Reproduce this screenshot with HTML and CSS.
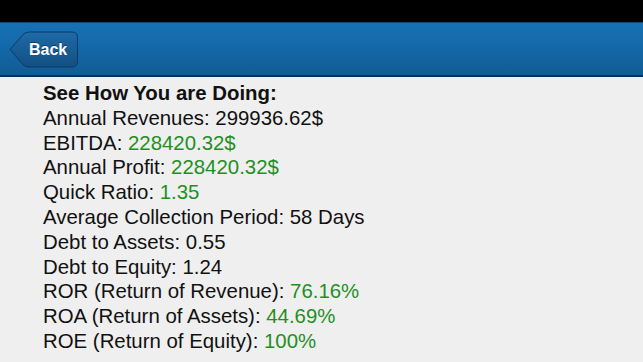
FILE: index.html
```html
<!DOCTYPE html>
<html lang="en">
<head>
    <meta charset="UTF-8">
    <meta name="viewport" content="width=device-width, initial-scale=1.0">
    <title>See How You are Doing</title>
    <link rel="stylesheet" href="styles.css">
</head>
<body>
    <div class="status-bar"></div>
    <div class="nav-bar">
        <button class="back-button">
            <svg class="back-shape" width="70" height="37" viewBox="0 0 70 37">
                <defs>
                    <linearGradient id="backGrad" x1="0" y1="0" x2="0" y2="1">
                        <stop offset="0" stop-color="#1e6aa8"/>
                        <stop offset="1" stop-color="#134f82"/>
                    </linearGradient>
                </defs>
                <path d="M1 18.5 L14 3.5 Q16 1 20 1 L63 1 Q68.5 1 68.5 6.5 L68.5 30.5 Q68.5 36 63 36 L20 36 Q16 36 14 33.5 Z" fill="url(#backGrad)" stroke="#0d3a63" stroke-width="1"/>
            </svg>
            <span class="back-label">Back</span>
        </button>
    </div>
    <div class="content">
        <div class="title">See How You are Doing:</div>
        <div class="row">Annual Revenues: 299936.62$</div>
        <div class="row">EBITDA: <span class="good">228420.32$</span></div>
        <div class="row">Annual Profit: <span class="good">228420.32$</span></div>
        <div class="row">Quick Ratio: <span class="good">1.35</span></div>
        <div class="row">Average Collection Period: 58 Days</div>
        <div class="row">Debt to Assets: 0.55</div>
        <div class="row">Debt to Equity: 1.24</div>
        <div class="row">ROR (Return of Revenue): <span class="good">76.16%</span></div>
        <div class="row">ROA (Return of Assets): <span class="good">44.69%</span></div>
        <div class="row">ROE (Return of Equity): <span class="good">100%</span></div>
    </div>
</body>
</html>
```

FILE: styles.css
```css
body {
    margin: 0;
    padding: 0;
    background: #efefef;
    font-family: 'Liberation Sans', Arial, sans-serif;
    height: 362px;
    overflow: hidden;
}

.status-bar {
    height: 22px;
    background: #000;
}

.nav-bar {
    height: 52px;
    background: linear-gradient(to bottom, #1770b5 0%, #146aac 40%, #125b93 100%);
    border-top: 1px solid #0f4a7a;
    border-bottom: 2px solid #0a2f50;
    display: flex;
    align-items: center;
    padding-left: 9px;
}

.back-button {
    position: relative;
    width: 70px;
    height: 37px;
    border: none;
    padding: 0;
    background: none;
    margin-top: 1px;
}

.back-shape {
    position: absolute;
    left: 0;
    top: 0;
}

.back-label {
    position: relative;
    display: block;
    padding-left: 20px;
    text-align: left;
    color: #fff;
    font-family: 'Liberation Sans', Arial, sans-serif;
    font-weight: bold;
    font-size: 16px;
    line-height: 37px;
    text-shadow: 0 -1px 0 rgba(0, 0, 0, 0.4);
}

.content {
    padding: 4px 0 0 43px;
    font-size: 20.4px;
    line-height: 24.8px;
    color: #111;
}

.title {
    font-weight: bold;
}

.good {
    color: #1f8f1f;
}
```
